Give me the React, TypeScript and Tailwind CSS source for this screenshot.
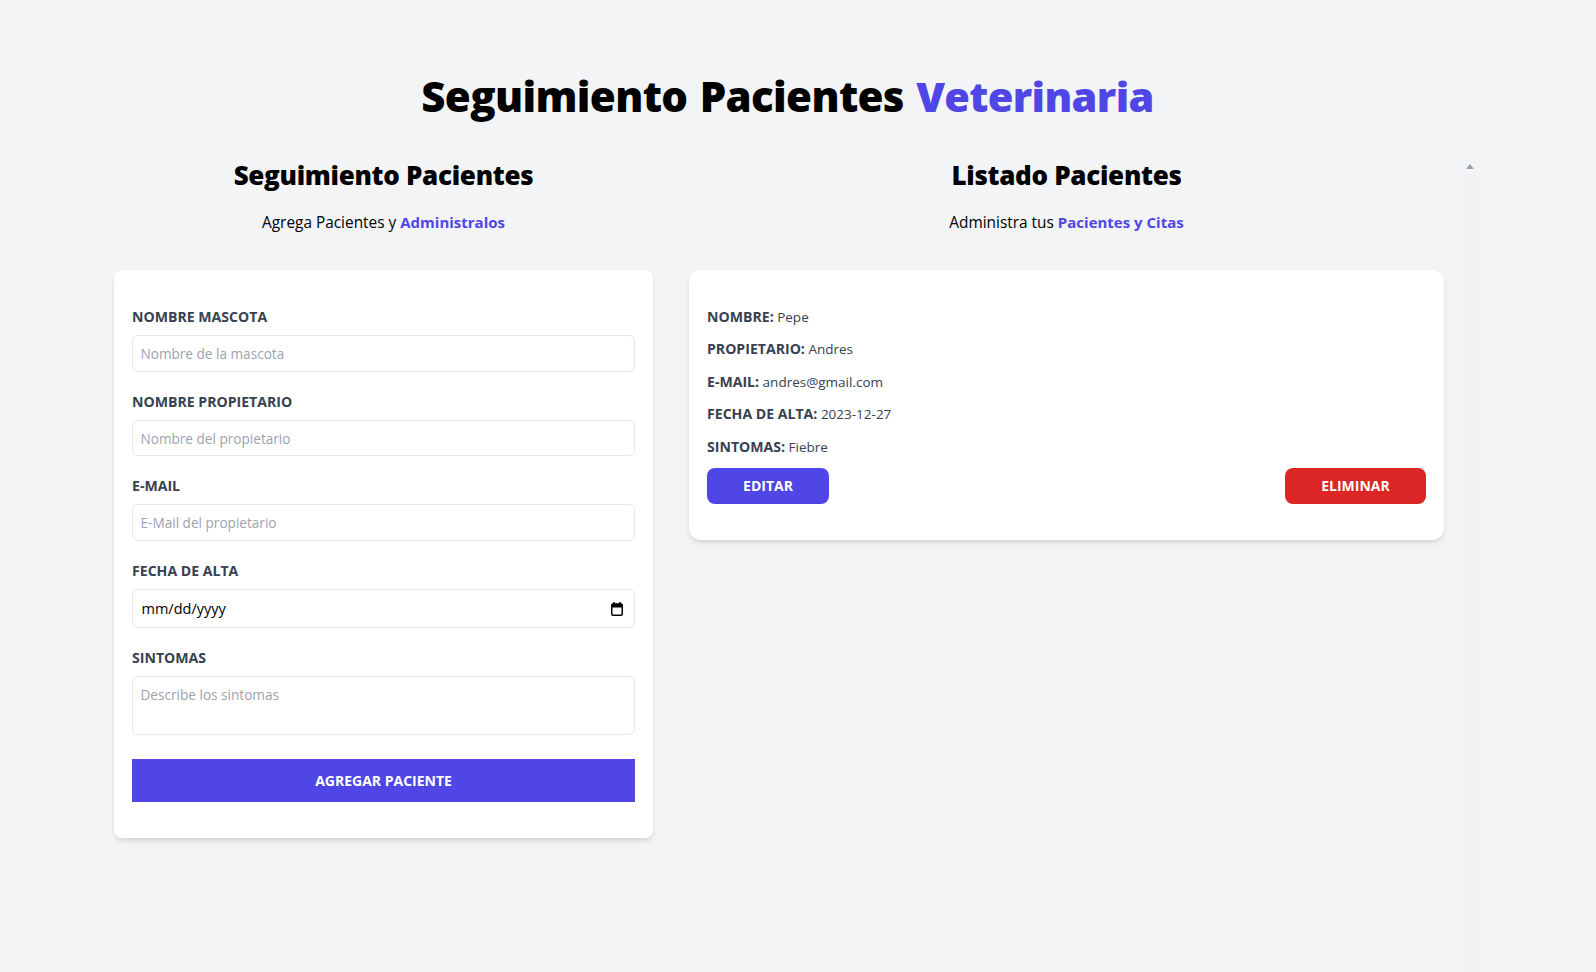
const inputClass =
  'block w-full border border-[#e5e7eb] rounded-md bg-white pl-[7.5px] pr-2 text-[13.6px] text-black placeholder:text-[#9ca3af] outline-none';

function Field({ label, children, className }: { label: string; children: React.ReactNode; className: string }) {
  return (
    <div className={className}>
      <label className="block h-[18px] leading-[18px] text-[14.1px] font-bold text-[#374151] uppercase mb-[9px]">{label}</label>
      {children}
    </div>
  );
}

function Row({ label, value, className }: { label: string; value: string; className: string }) {
  return (
    <p className={`h-[20px] leading-[20px] text-[13.5px] text-[#374151] ${className}`}>
      <span className="font-bold text-[14.1px] uppercase">{label}</span> {value}
    </p>
  );
}

export default function App() {
  return (
    <div className="min-h-[972px] bg-[#f3f4f6] overflow-hidden font-['Open_Sans','Noto_Sans',sans-serif] text-black">
      <h1 className="mt-[68px] h-[56px] pr-[21px] leading-[56px] text-center text-[42px] font-extrabold tracking-[-0.65px] [word-spacing:2px]">
        Seguimiento Pacientes <span className="text-[41.5px] text-[#4f46e5]">Veterinaria</span>
      </h1>

      <div className="mt-[34px] flex pl-[114px]">
        {/* Formulario */}
        <div className="w-[539px]">
          <h2 className="h-[34px] leading-[34px] text-center text-[26px] font-extrabold tracking-[-0.3px]">Seguimiento Pacientes</h2>
          <p className="mt-[18px] h-[24px] leading-[24px] text-center text-[15.4px]">
            Agrega Pacientes y <span className="font-bold text-[15px] text-[#4f46e5]">Administralos</span>
          </p>
          <form className="mt-[36px] h-[568px] bg-white rounded-lg shadow-md px-[18px] pt-[38px]">
            <Field label="Nombre Mascota" className="">
              <input className={`${inputClass} h-[37px]`} placeholder="Nombre de la mascota" />
            </Field>
            <Field label="Nombre Propietario" className="mt-[21px]">
              <input className={`${inputClass} h-[36px]`} placeholder="Nombre del propietario" />
            </Field>
            <Field label="E-Mail" className="mt-[21px]">
              <input className={`${inputClass} h-[37px]`} placeholder="E-Mail del propietario" />
            </Field>
            <Field label="Fecha de Alta" className="mt-[21px]">
              <div className={`${inputClass} h-[39px] flex items-center justify-between !text-[14.5px]`}>
                <span className="ml-[1px]">mm/dd/yyyy</span>
                <svg className="w-[12px] h-[14px] mr-[3px]" viewBox="0 0 12 14" fill="none">
                  <path d="M3 0v3M9 0v3" stroke="#000" strokeWidth="1.6" />
                  <rect x="0.75" y="2" width="10.5" height="11.25" rx="1.2" stroke="#000" strokeWidth="1.5" />
                  <rect x="0.75" y="2" width="10.5" height="3.5" fill="#000" />
                </svg>
              </div>
            </Field>
            <Field label="Sintomas" className="mt-[21px]">
              <textarea className={`${inputClass} h-[59px] pt-[8px] resize-none`} placeholder="Describe los sintomas" />
            </Field>
            <button type="button" className="mt-[24px] block w-full h-[43px] bg-[#4f46e5] text-white text-[14px] font-bold uppercase">
              Agregar Paciente
            </button>
          </form>
        </div>

        {/* Listado */}
        <div className="ml-[36px] w-[755px]">
          <h2 className="h-[34px] leading-[34px] text-center text-[26px] font-extrabold tracking-[-0.3px]">Listado Pacientes</h2>
          <p className="mt-[18px] h-[24px] leading-[24px] text-center text-[15.4px]">
            Administra tus <span className="font-bold text-[15px] text-[#4f46e5]">Pacientes y Citas</span>
          </p>
          <div className="mt-[36px] h-[270px] bg-white rounded-xl shadow-md px-[18px] pt-[37px]">
            <Row label="Nombre:" value="Pepe" className="" />
            <Row label="Propietario:" value="Andres" className="mt-[12px]" />
            <Row label="E-Mail:" value="andres@gmail.com" className="mt-[13px]" />
            <Row label="Fecha de Alta:" value="2023-12-27" className="mt-[12px]" />
            <Row label="Sintomas:" value="Fiebre" className="mt-[13px]" />
            <div className="mt-[11px] flex justify-between">
              <button type="button" className="w-[122px] h-[36px] pb-[1px] rounded-lg bg-[#4f46e5] text-white text-[14px] font-bold uppercase">Editar</button>
              <button type="button" className="w-[141px] h-[36px] pb-[1px] rounded-lg bg-[#dc2626] text-white text-[14px] font-bold uppercase">Eliminar</button>
            </div>
          </div>
        </div>

        {/* Barra de scroll */}
        <div className="ml-[19px] w-[20px]">
          <svg className="block w-2 h-[5px] mt-[6px] mb-[5px] ml-[3px]" viewBox="0 0 8 5"><path d="M4 0 8 5H0z" fill="#9ca3af" /></svg>
          <div className="h-[800px] bg-[#f1f2f3]" />
        </div>
      </div>
    </div>
  );
}
